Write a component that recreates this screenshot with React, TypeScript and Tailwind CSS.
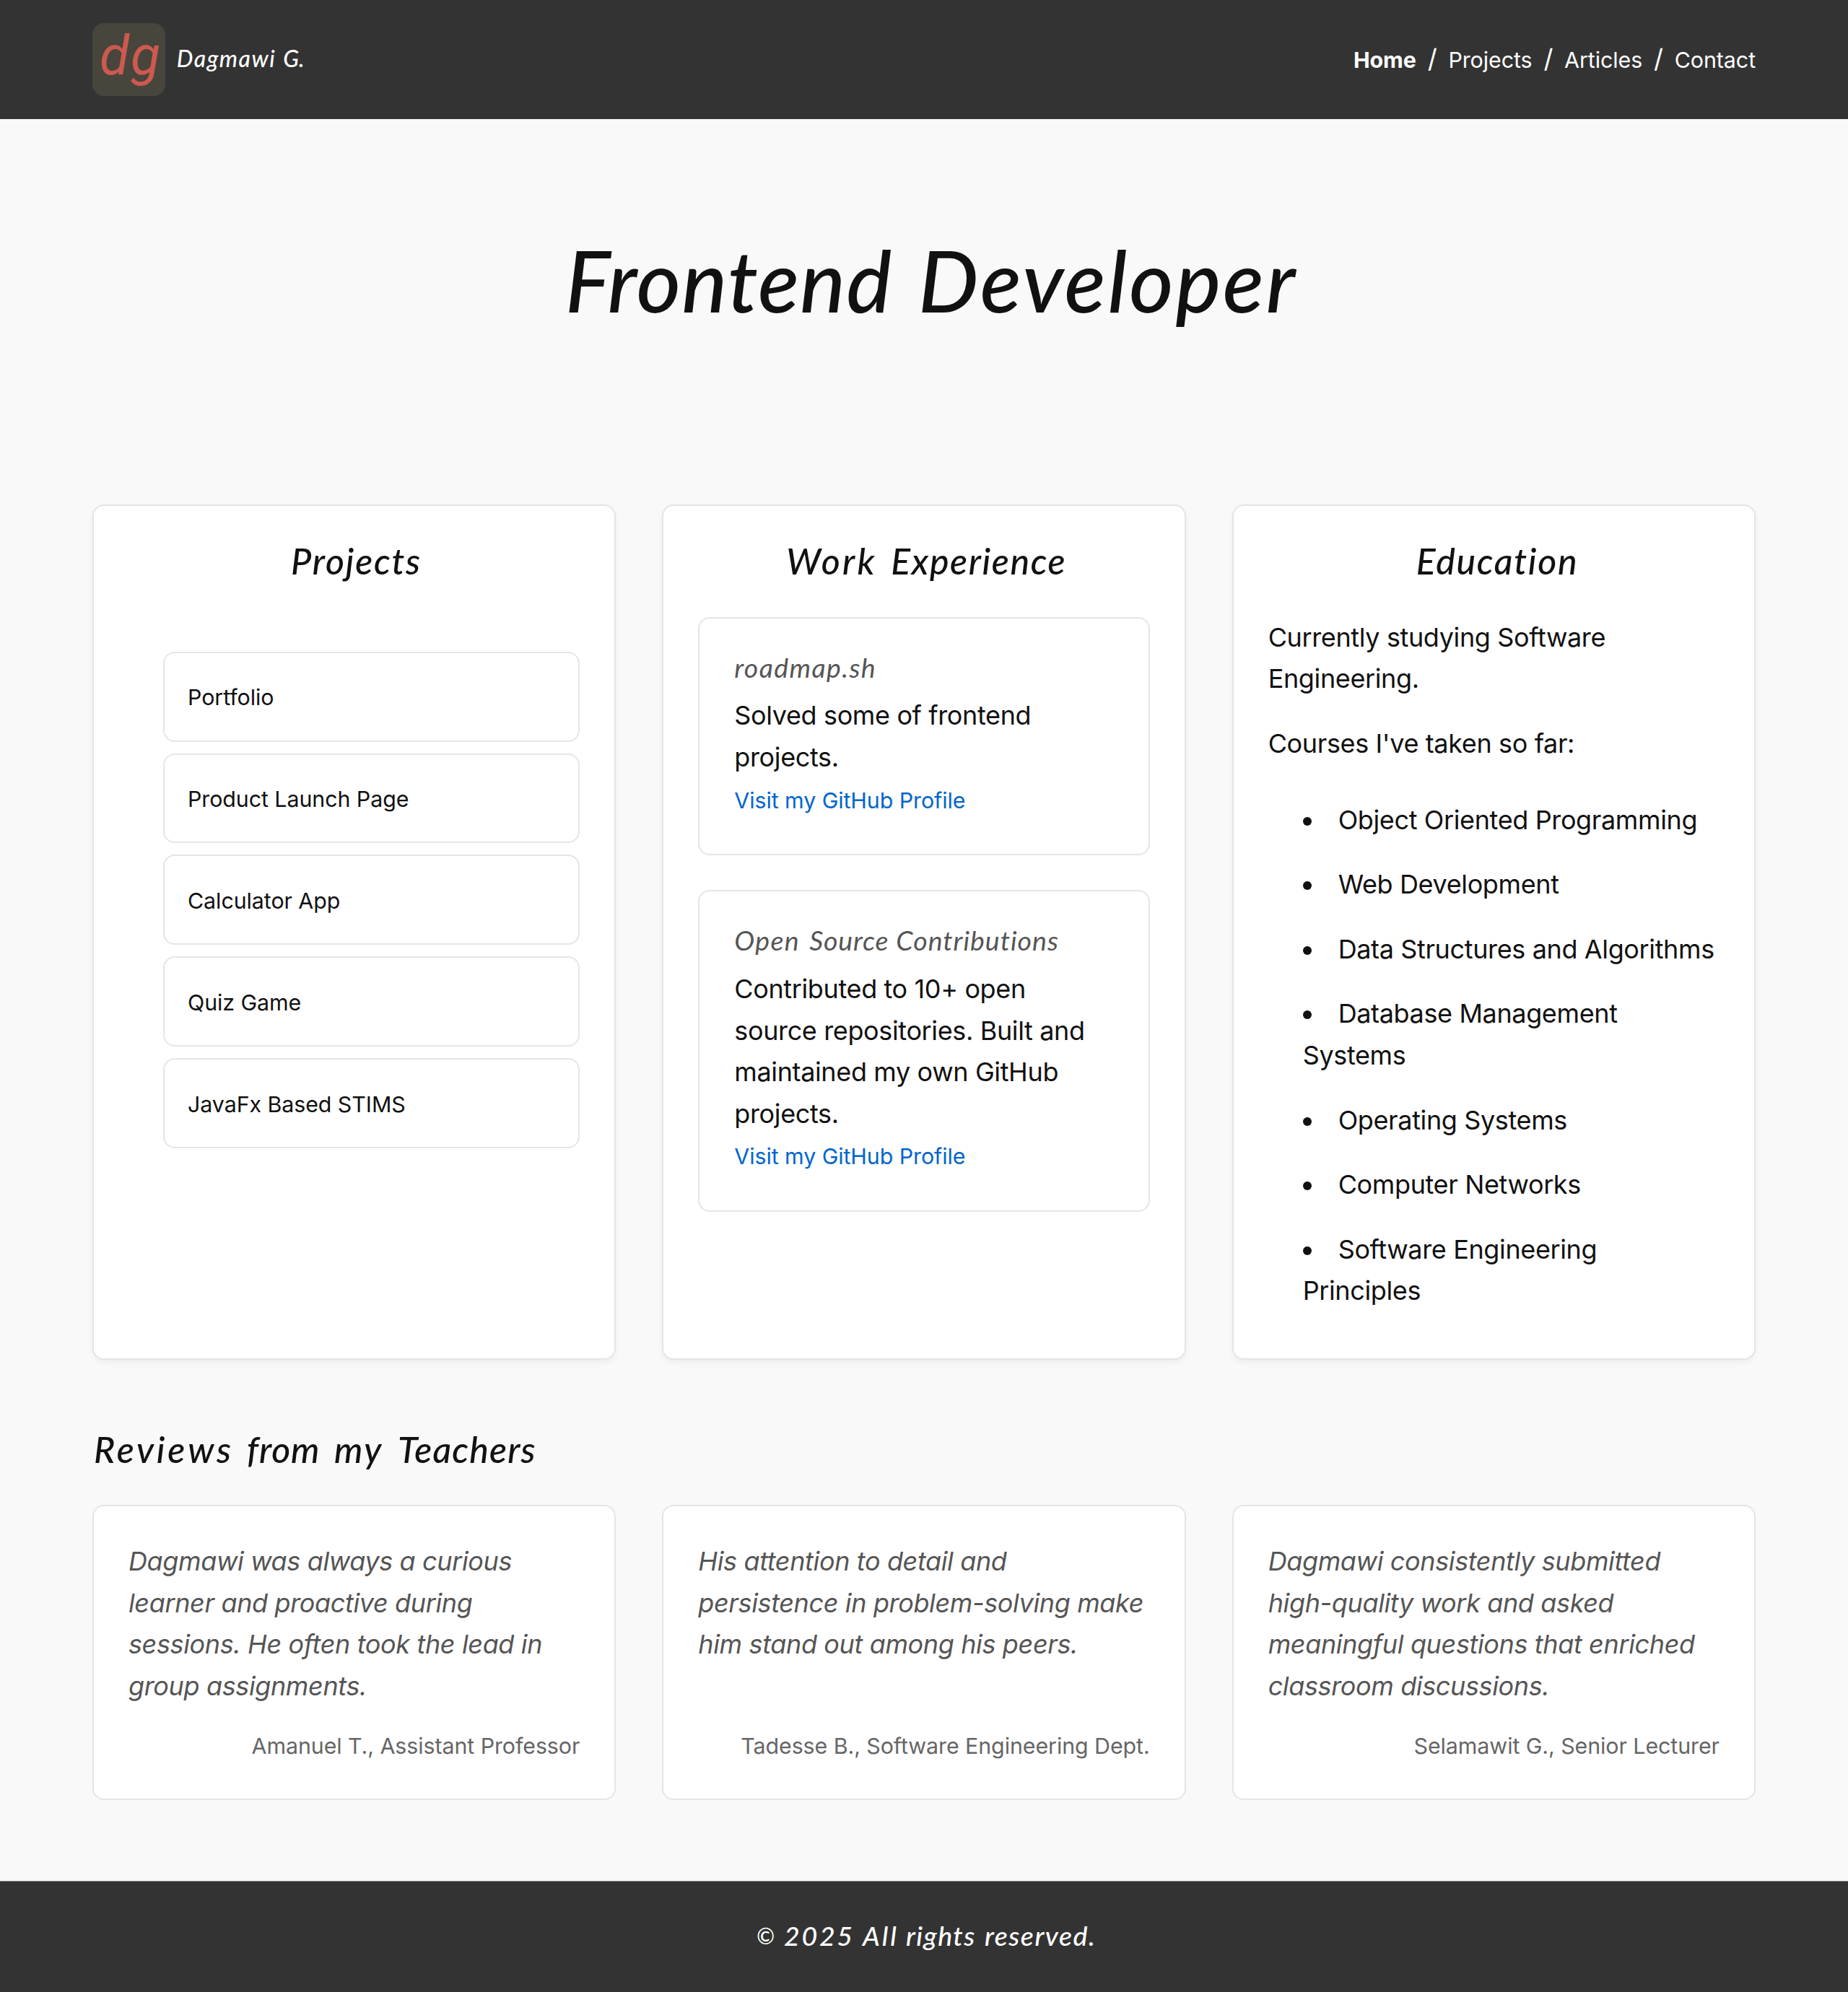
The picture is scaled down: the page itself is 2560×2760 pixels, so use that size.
import React from "react";

const DISPLAY = "font-['Lato',sans-serif] italic";
const SMALL = "text-[30.4px] tracking-[-0.08px]";

// Each word is [text, classes]; the classes set its tracking and its pitch to the next word.
type Word = [string, string];

function Words({ words }: { words: Word[] }) {
  return (
    <>
      {words.map(([text, cls]) => (
        <span key={text} className={`inline-block whitespace-nowrap ${cls}`}>
          {text}
        </span>
      ))}
    </>
  );
}

function Heading({ words, className = "" }: { words: Word[]; className?: string }) {
  return (
    <h2 className={`${DISPLAY} mb-12 flex h-[57.6px] text-[50px] leading-[56px] font-medium ${className}`}>
      <Words words={words} />
    </h2>
  );
}

function Card({ children }: { children: React.ReactNode }) {
  return (
    <section className="rounded-2xl border-2 border-[#e5e5e5] bg-white p-12 shadow-[0_4px_10px_rgba(0,0,0,0.05)]">
      {children}
    </section>
  );
}

function Job({ title, text }: { title: Word[]; text: string }) {
  return (
    <article className="rounded-2xl border-2 border-[#e5e5e5] p-12">
      <h3 className={`${DISPLAY} flex h-[58.6px] text-[37.5px] leading-[39px] text-[#555]`}>
        <Words words={title} />
      </h3>
      <p>{text}</p>
      <div className="h-[56.8px]">
        <a className={`${SMALL} text-[#0066cc]`}>Visit my GitHub Profile</a>
      </div>
    </article>
  );
}

const projects = ["Portfolio", "Product Launch Page", "Calculator App", "Quiz Game", "JavaFx Based STIMS"];

const courses = [
  "Object Oriented Programming",
  "Web Development",
  "Data Structures and Algorithms",
  "Database Management Systems",
  "Operating Systems",
  "Computer Networks",
  "Software Engineering Principles",
];

const reviews = [
  {
    text: "Dagmawi was always a curious learner and proactive during sessions. He often took the lead in group assignments.",
    author: "Amanuel T., Assistant Professor",
  },
  {
    text: "His attention to detail and persistence in problem-solving make him stand out among his peers.",
    author: "Tadesse B., Software Engineering Dept.",
  },
  {
    text: "Dagmawi consistently submitted high-quality work and asked meaningful questions that enriched classroom discussions.",
    author: "Selamawit G., Senior Lecturer",
  },
];

export default function App() {
  return (
    <div className="flex h-[2760px] flex-col bg-[#f9f9f9] font-['Inter',sans-serif] text-[36px] leading-[57.6px] tracking-[-0.37px] text-[#111]">
      <header className="flex h-[164.8px] shrink-0 items-center justify-between bg-[#333] px-32 text-white">
        <div className="flex items-center gap-4">
          <div className="flex h-[100.8px] w-[100.8px] rounded-2xl bg-[#48453d] pl-[10px] font-['Roboto',sans-serif] text-[75px] leading-[90px] text-[#cc5a4e] italic">
            <span className="inline-block w-[43px]">d</span>
            <span>g</span>
          </div>
          <div className={`${DISPLAY} mb-[3px] flex text-[32px] leading-8 font-medium`}>
            <Words words={[["Dagmawi", "w-[147.5px] tracking-[1.5px]"], ["G.", "tracking-[0px]"]]} />
          </div>
        </div>
        <nav className="flex items-baseline gap-4">
          {["Home", "Projects", "Articles", "Contact"].map((item, i) => (
            <React.Fragment key={item}>
              {i > 0 && <span>/</span>}
              <a className={i === 0 ? `${SMALL} font-bold` : SMALL}>{item}</a>
            </React.Fragment>
          ))}
        </nav>
      </header>

      <h1
        className={`${DISPLAY} mt-[163.5px] mb-[253px] flex h-[118px] shrink-0 pl-[783px] text-[118px] leading-[119px] font-medium`}
      >
        <Words words={[["Frontend", "w-[489px] tracking-[1.4px]"], ["Developer", "tracking-[2.9px]"]]} />
      </h1>

      <main className="grid h-[1184.4px] shrink-0 grid-cols-3 gap-16 px-32">
        <Card>
          <Heading words={[["Projects", "tracking-[1.8px]"]]} className="pl-[225px]" />
          <ul className="mt-24 ml-12 flex flex-col gap-4">
            {projects.map((p) => (
              <li
                key={p}
                className={`${SMALL} flex h-[124.8px] items-center rounded-2xl border-2 border-[#e5e5e5] px-8 pt-1`}
              >
                {p}
              </li>
            ))}
          </ul>
        </Card>
        <Card>
          <Heading
            words={[
              ["Work", "w-[145px] tracking-[3.2px]"],
              ["Experience", "tracking-[1.6px]"],
            ]}
            className="pl-[122px]"
          />
          <div className="flex flex-col gap-12">
            <Job title={[["roadmap.sh", "tracking-[1.4px]"]]} text="Solved some of frontend projects." />
            <Job
              title={[
                ["Open", "w-[104px] tracking-[1.3px]"],
                ["Source", "w-[120px] tracking-[0.8px]"],
                ["Contributions", "tracking-[1px]"],
              ]}
              text="Contributed to 10+ open source repositories. Built and maintained my own GitHub projects."
            />
          </div>
        </Card>
        <Card>
          <Heading words={[["Education", "tracking-[1.7px]"]]} className="pl-[205px]" />
          <p className="mb-8">Currently studying Software Engineering.</p>
          <p className="mb-12">Courses I've taken so far:</p>
          <ul className="ml-12 flex list-inside list-disc flex-col gap-8">
            {courses.map((c) => (
              <li key={c}>{c}</li>
            ))}
          </ul>
        </Card>
      </main>

      <section className="mt-24 shrink-0 px-32">
        <Heading
          words={[
            ["Reviews", "w-[212px] tracking-[3.8px]"],
            ["from", "w-[121px] tracking-[0.8px]"],
            ["my", "w-[88px] tracking-[2.5px]"],
            ["Teachers", "tracking-[1.2px]"],
          ]}
          className="pl-[2px]"
        />
        <div className="grid grid-cols-3 gap-16">
          {reviews.map((r) => (
            <figure
              key={r.author}
              className="flex h-[408.8px] flex-col justify-between rounded-2xl border-2 border-[#e5e5e5] bg-white p-12"
            >
              <blockquote className="text-[#555] italic">{r.text}</blockquote>
              <figcaption className={`${SMALL} text-right leading-[48.64px] text-[#666]`}>{r.author}</figcaption>
            </figure>
          ))}
        </div>
      </section>

      <footer
        className={`${DISPLAY} mt-auto flex h-[154px] shrink-0 border-t border-[#838383] bg-[#333] pt-12 pl-[1048px] text-[37.5px] leading-[54.4px] font-medium text-white`}
      >
        <Words
          words={[
            ["©", "w-[38px] text-[30px]"],
            ["2025", "w-[109px] tracking-[2.7px]"],
            ["All", "w-[60px] tracking-[2.9px]"],
            ["rights", "w-[109px] tracking-[1.4px]"],
            ["reserved.", "tracking-[1.5px]"],
          ]}
        />
      </footer>
    </div>
  );
}
